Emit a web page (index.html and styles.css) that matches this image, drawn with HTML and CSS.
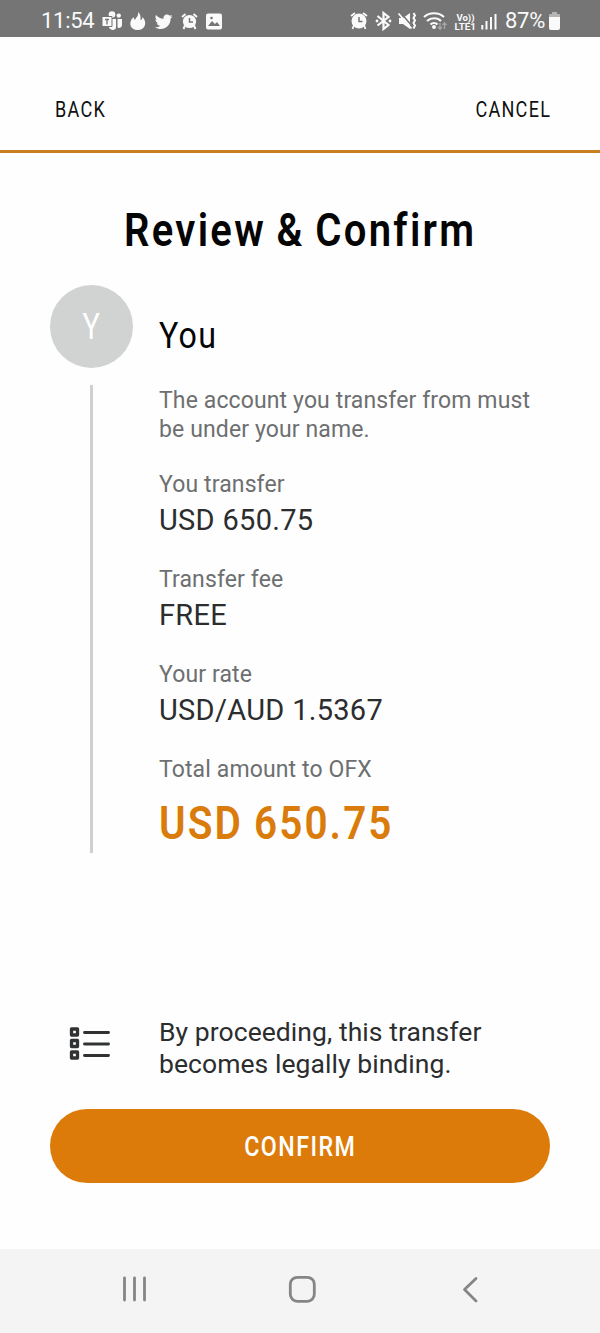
FILE: index.html
```html
<!DOCTYPE html>
<html lang="en">
<head>
<meta charset="utf-8">
<title>Review &amp; Confirm</title>
<link rel="stylesheet" href="styles.css">
</head>
<body>
<div class="screen">
  <div class="status">
    <span class="time">11:54</span>
    <svg class="tray" width="124" height="24" viewBox="0 0 124 24" fill="#fafafa">
      <circle cx="11" cy="5.600" r="3.300"/><circle cx="17.800" cy="6.600" r="2.200"/>
      <path d="M6 10h9v8.500c0 3-5.500 3.500-7 0zM16.500 10h4.500v6c0 3-4 4-4.500 2z"/>
      <path d="M1 7.500h10v10H1z" stroke="#757575"/><path d="M4 10.500h4M6 10.500v5" stroke="#757575" stroke-width="1.300"/>
      <path d="M37 3c1 4-2 5-3 8-1-1-1.500-2-1.500-3-6 6-3 13 4 13 8 0 10-8 5-13 0 2-1 3-2 3 .5-4-.5-6.500-2.500-8z"/>
      <path d="M71.500 7.200c-.8.400-1.400.5-2.100.600.8-.500 1.300-1.200 1.600-2-.8.400-1.500.7-2.300.9-2.600-2.600-6.800-.6-6.100 3.100-3 0-5.700-1.500-7.600-3.800-1 1.700-.6 3.800 1.100 4.900-.6 0-1.200-.2-1.700-.4 0 1.800 1.300 3.300 3 3.600-.5.200-1.100.2-1.700.1.500 1.500 1.800 2.500 3.500 2.500-1.600 1.200-3.500 1.700-5.400 1.500 7.500 4.600 16-.3 15.800-8.700.8-.6 1.400-1.300 1.900-2.300z"/>
      <g transform="translate(79 2.500)"><circle cx="9.500" cy="10" r="6.600"/><path d="M5 14l-1.500 3.500M14 14l1.500 3.500M2 5.500L5.500 2.500M17 5.500L13.500 2.500" stroke="#fafafa" stroke-width="2"/><path d="M9.500 6.500v4h3.500" fill="none" stroke="#757575" stroke-width="1.500"/></g>
      <rect x="105" y="4.500" width="16" height="16" rx="2"/><path d="M107 17l4-5 3 3 2-2 3 4z" fill="#757575"/><circle cx="110.500" cy="9" r="1.300" fill="#757575"/>
    </svg>
    <svg class="signals" width="154" height="26" viewBox="0 0 154 26" fill="none" stroke="#fafafa" stroke-width="1.800">
      <circle cx="10" cy="13" r="6.600" fill="#fafafa"/><path d="M5 17l-1.500 4M15 17l1.500 4M2 8l4-3M18 8l-4-3"/><path d="M10 9v4.500h3.500" stroke="#757575" stroke-width="1.500"/>
      <path d="M28.500 8l11 9-5 4V5l5 4-11 8.500" stroke-width="2.200"/><circle cx="28" cy="13" r="1.400" fill="#fafafa" stroke="none"/><circle cx="41" cy="13" r="1.400" fill="#fafafa" stroke="none"/>
      <path d="M50 10h4l7-5v16l-7-5h-4z" fill="#fafafa" stroke="none"/><path d="M50.500 3.500l13 15" stroke="#757575" stroke-width="1.500"/><path d="M49.500 5.500l13 15" stroke-width="1.800"/><path d="M64.500 5l1.500 2.500-1.500 2.500 1.500 2.500-1.500 2.500 1.500 2.500-1.500 3" stroke-width="2"/>
      <path d="M75 9c5.500-5 14.500-5 20 0M78 13c4-3.700 10.500-3.700 14 0M81.500 16.500c2-2 5-2 7 0" stroke-width="2.200"/><circle cx="85" cy="19" r="2" fill="#fafafa" stroke="none"/>
      <path d="M91 15v6l-2-2M91 21l2-2M95.500 21v-6l-2 2M95.500 15l2 2" stroke="#aaa" stroke-width="1.200"/>
      <path d="M133.300 17v4.500M137.500 13v8.500M142 9v12.500M146.500 6v15.500" stroke-width="2"/>
      <text x="107.500" y="12.500" textLength="18" lengthAdjust="spacingAndGlyphs" class="volte">Vo))</text>
      <text x="105.500" y="22" textLength="21.500" lengthAdjust="spacingAndGlyphs" class="volte">LTE1</text>
    </svg>
    <span class="percent">87%</span>
    <svg class="battery" width="13" height="20" viewBox="0 0 13 20"><path d="M4 1h5v2h2q1 0 1 1v3H1V4q0-1 1-1h2z" fill="#b5b5b5"/><path d="M1 6h11v11q0 2-2 2H3q-2 0-2-2z" fill="#fafafa"/></svg>
  </div>
  <header class="header">
    <a class="back">BACK</a>
    <a class="cancel">CANCEL</a>
  </header>
  <main class="main">
    <h1 class="title">Review &amp; Confirm</h1>
    <section class="party">
      <div class="rail"><div class="avatar"><span class="initial">Y</span></div><div class="line"></div></div>
      <div class="details">
        <h2 class="name">You</h2>
        <p class="note">The account you transfer from must<br>be under your name.</p>
        <div class="row"><div class="label">You transfer</div><div class="value">USD 650.75</div></div>
        <div class="row"><div class="label">Transfer fee</div><div class="value">FREE</div></div>
        <div class="row"><div class="label">Your rate</div><div class="value">USD/AUD 1.5367</div></div>
        <div class="row"><div class="label">Total amount to OFX</div><div class="total">USD 650.75</div></div>
      </div>
    </section>
    <section class="legal">
      <svg class="list" width="42" height="36" viewBox="0 0 42 36" fill="none" stroke="#303234" stroke-width="3.300" stroke-linejoin="round">
        <path d="M2.500 3h6v6h-6zM2.500 14.500h6v6h-6zM2.500 26h6v6h-6z"/>
        <path d="M15.500 6.500h24M15.500 18h24M15.500 29.500h24" stroke-linecap="round" stroke-width="2.900"/>
      </svg>
      <p class="terms">By proceeding, this transfer<br>becomes legally binding.</p>
    </section>
    <button class="confirm"><span class="confirm-text">CONFIRM</span></button>
  </main>
  <nav class="nav">
    <svg width="400" height="84" viewBox="0 0 400 84" fill="none" stroke="#858585" stroke-width="2.800" stroke-linecap="round" stroke-linejoin="round">
      <path d="M24.500 29v22M34.500 29v22M44.500 29v22"/>
      <rect x="190.300" y="28.300" width="24" height="24" rx="7"/>
      <path d="M376 29.500l-11.500 11 11.500 11.500"/>
    </svg>
  </nav>
</div>
</body>
</html>
```
FILE: styles.css
```css
* { box-sizing: border-box; }
body { margin: 0; background: #fefefe; font-family: Roboto, "Liberation Sans", sans-serif; color: #2b2d2f; }
h1, h2, p { margin: 0; font-weight: 400; }
.screen { width: 600px; height: 1333px; display: flex; flex-direction: column; overflow: hidden; }
.status { height: 37px; flex: none; background: #757575; color: #fafafa; display: flex; align-items: center; padding: 4px 0 0 41px; font-size: 22px; }
.time { width: 60px; white-space: nowrap; letter-spacing: -.3px; }
.tray { flex: none; }
.signals { flex: none; margin-left: 124px; }
.percent { width: 43px; margin-left: 2px; white-space: nowrap; letter-spacing: -.3px; }
.battery { flex: none; }
.volte { font-size: 8.800px; font-weight: 700; fill: #fafafa; stroke: none; }
.header { height: 116px; flex: none; border-bottom: 3px solid #c97f1f; display: flex; justify-content: space-between; align-items: center; padding: 33px 49px 0 55px; font-size: 21.500px; line-height: 26px; color: #111; }
.back, .cancel, .title, .name, .total, .confirm-text, .initial { white-space: nowrap; display: block; }
.back { transform: scaleX(.84); transform-origin: left; letter-spacing: 1.500px; }
.cancel { transform: scaleX(.84); transform-origin: right; letter-spacing: 1.500px; }
.main { flex: 1; padding: 48px 50px 0; display: flex; flex-direction: column; }
.title { align-self: center; font-size: 45.500px; line-height: 60px; font-weight: 600; color: #050505; letter-spacing: 2.600px; word-spacing: -2px; transform: scaleX(.88); }
.party { display: flex; gap: 26px; margin-top: 24px; }
.rail { width: 83px; display: flex; flex-direction: column; align-items: center; gap: 17px; }
.avatar { width: 83px; height: 83px; border-radius: 50%; background: #d1d3d2; color: #fff; font-size: 37px; display: flex; align-items: center; justify-content: center; }
.initial { transform: scaleX(.78); }
.line { width: 3.500px; height: 468px; background: #cfcfcf; }
.details { width: 400px; display: flex; flex-direction: column; }
.name { margin-top: 28px; font-size: 37px; line-height: 46px; color: #050505; transform: scaleX(.87); transform-origin: left; letter-spacing: 1.500px; }
.note { margin-top: 27px; font-size: 23px; line-height: 29px; color: #6d6f70; letter-spacing: .12px; white-space: nowrap; }
.row { margin-top: 25px; height: 70px; }
.note + .row { margin-top: 26px; }
.label { font-size: 23px; line-height: 29px; color: #6d6f70; letter-spacing: .12px; }
.value { font-size: 29px; line-height: 36px; margin-top: 3px; letter-spacing: .3px; }
.total { margin-top: 14px; font-size: 45.500px; line-height: 52px; font-weight: 600; color: #d97c0b; transform: scaleX(.89); transform-origin: left; letter-spacing: 2.300px; word-spacing: -1px; }
.legal { display: flex; align-items: flex-start; padding-left: 19px; gap: 48px; margin-top: 163px; }
.list { flex: none; margin-top: 10px; }
.terms { font-size: 26.500px; line-height: 32px; white-space: nowrap; letter-spacing: .06px; }
.confirm { width: 500px; height: 74px; margin-top: 29px; border: 0; border-radius: 37px; background: #dc7b09; color: #fff; font: 500 27px Roboto, sans-serif; display: flex; align-items: center; justify-content: center; padding: 2px 0 0; }
.confirm-text { transform: scaleX(.86); letter-spacing: 1.700px; }
.nav { height: 84px; flex: none; background: #f4f4f4; padding-left: 100px; }
```
